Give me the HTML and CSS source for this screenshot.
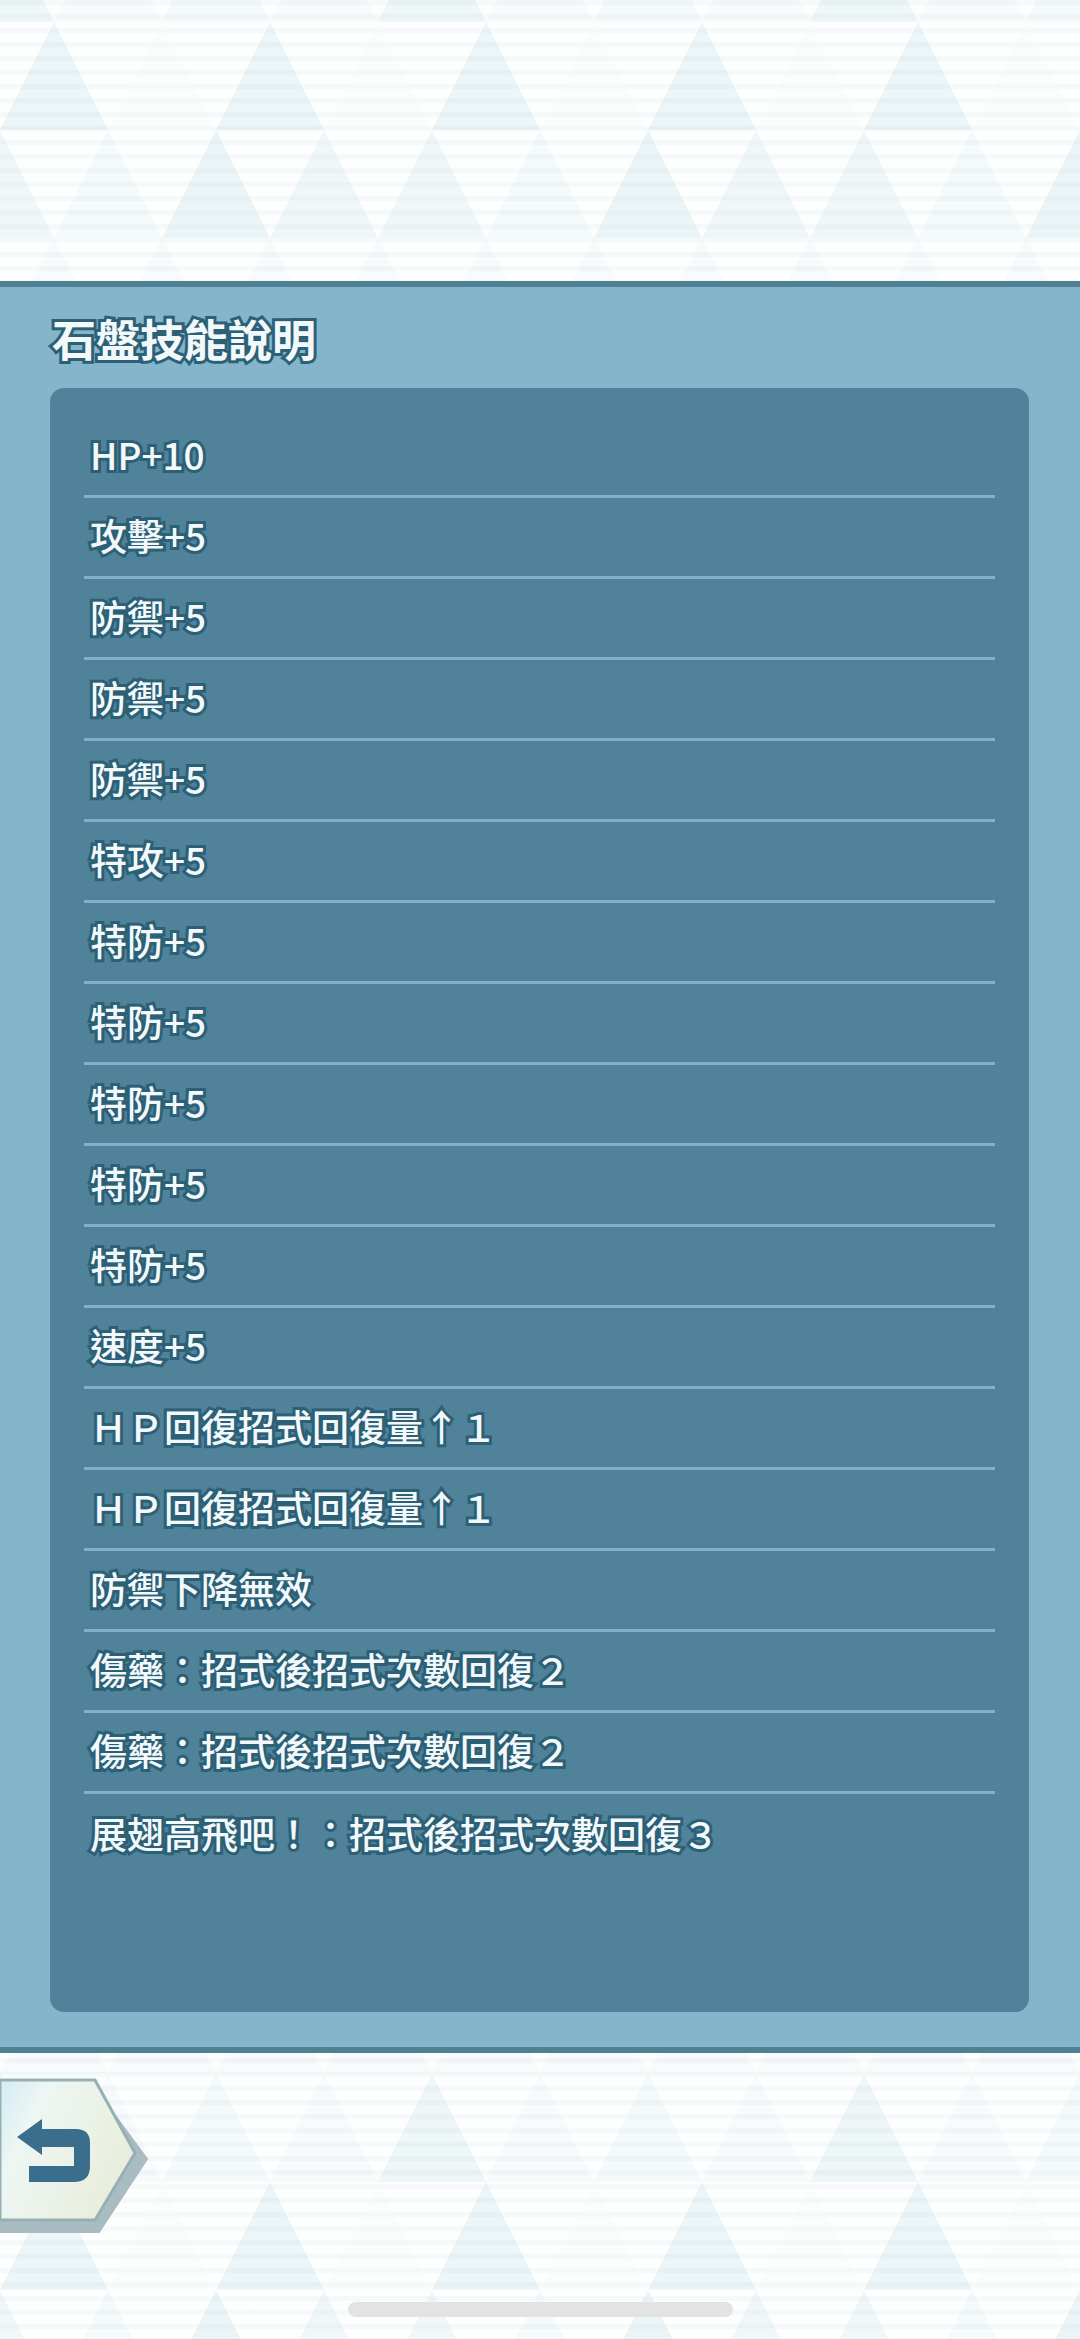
FILE: index.html
```html
<!DOCTYPE html>
<html lang="zh-Hant">
<head>
  <meta charset="UTF-8" />
  <meta name="viewport" content="width=device-width, initial-scale=1" />
  <title>石盤技能說明</title>
  <link rel="stylesheet" href="styles.css">
</head>
<body>
  <div class="top-space"></div>

  <main class="panel">
    <h1 class="panel-title">石盤技能說明</h1>
    <ul class="skill-list">
      <li class="skill">HP+10</li>
      <li class="skill">攻擊+5</li>
      <li class="skill">防禦+5</li>
      <li class="skill">防禦+5</li>
      <li class="skill">防禦+5</li>
      <li class="skill">特攻+5</li>
      <li class="skill">特防+5</li>
      <li class="skill">特防+5</li>
      <li class="skill">特防+5</li>
      <li class="skill">特防+5</li>
      <li class="skill">特防+5</li>
      <li class="skill">速度+5</li>
      <li class="skill">ＨＰ回復招式回復量↑１</li>
      <li class="skill">ＨＰ回復招式回復量↑１</li>
      <li class="skill">防禦下降無效</li>
      <li class="skill">傷藥：招式後招式次數回復２</li>
      <li class="skill">傷藥：招式後招式次數回復２</li>
      <li class="skill skill-last">展翅高飛吧！：招式後招式次數回復３</li>
    </ul>
  </main>

  <footer class="bottom">
    <button class="back-btn" aria-label="返回">
      <svg width="150" height="160" viewBox="0 0 150 160">
        <defs>
          <linearGradient id="faceFill" x1="0" y1="0" x2="1" y2="0.5">
            <stop offset="0" stop-color="#d3ecf4" />
            <stop offset="0.3" stop-color="#eef6f3" />
            <stop offset="1" stop-color="#e8eedc" />
          </linearGradient>
        </defs>
        <path d="M0 16H97L147 84L99 157H0Z" fill="#a8bcc1" stroke="#a8bcc1" stroke-width="2" stroke-linejoin="round" />
        <path d="M0 5H95L135 78L95 145H0Z" fill="url(#faceFill)" stroke="#98afb3" stroke-width="3" stroke-linejoin="round" />
        <path d="M17 62L42 44V54H76Q90 54 90 68V91Q90 107 74 107H29V91H74V72H42V80Z" fill="#3b6e8c" />
      </svg>
    </button>
    <div class="home-bar"></div>
  </footer>
</body>
</html>
```

FILE: styles.css
```css
:root {
  --panel: #84b5ca;
  --panel-dark: #50829a;
  --edge: #4f8094;
  --divider: #7fb2c8;
  --text: #f3f9fb;
  --outline: #2c6076;
}

* {
  box-sizing: border-box;
  margin: 0;
  padding: 0;
}

body {
  width: 1080px;
  height: 2339px;
  overflow: hidden;
  display: flex;
  flex-direction: column;
  font-family: "Noto Sans CJK TC", "Noto Sans", sans-serif;
  color: var(--text);
  background-color: #fdfefe;
  background-image:
    repeating-linear-gradient(180deg, rgba(200, 220, 226, 0.14) 0 5px, rgba(255, 255, 255, 0.1) 5px 14px),
    url("data:image/svg+xml,%3Csvg xmlns='http://www.w3.org/2000/svg' width='432' height='432'%3E%3Cpath fill='%23d5e9ef' fill-opacity='.42' d='M-54 108L0 0L54 108ZM378 108L432 0L486 108Z'/%3E%3Cpath fill='%23d5e9ef' fill-opacity='.16' d='M54 108L108 0L162 108ZM270 108L324 0L378 108Z'/%3E%3Cpath fill='%23d5e9ef' fill-opacity='.26' d='M162 108L216 0L270 108Z'/%3E%3Cpath fill='%23d5e9ef' fill-opacity='.48' d='M0 216L54 108L108 216ZM216 216L270 108L324 216Z'/%3E%3Cpath fill='%23d5e9ef' fill-opacity='.06' d='M108 216L162 108L216 216ZM324 216L378 108L432 216Z'/%3E%3Cpath fill='%23d5e9ef' fill-opacity='.36' d='M-54 324L0 216L54 324ZM378 324L432 216L486 324Z'/%3E%3Cpath fill='%23d5e9ef' fill-opacity='.22' d='M54 324L108 216L162 324Z'/%3E%3Cpath fill='%23d5e9ef' fill-opacity='.5' d='M162 324L216 216L270 324Z'/%3E%3Cpath fill='%23d5e9ef' fill-opacity='.34' d='M270 324L324 216L378 324Z'/%3E%3Cpath fill='%23d5e9ef' fill-opacity='.16' d='M0 432L54 324L108 432ZM108 432L162 324L216 432ZM216 432L270 324L324 432ZM324 432L378 324L432 432Z'/%3E%3C/svg%3E");
  background-position: 0 0, 0 -86px;
}

.top-space {
  height: 281px;
}

.panel {
  height: 1772px;
  display: flex;
  flex-direction: column;
  background: var(--panel);
  border-top: 6px solid var(--edge);
  border-bottom: 6px solid var(--edge);
}

.panel-title {
  padding: 26px 0 0 52px;
  margin-bottom: 25px;
  font-size: 44px;
  line-height: 50px;
  font-weight: 700;
  -webkit-text-stroke: 6px var(--outline);
  paint-order: stroke fill;
}

.skill-list {
  flex: 1;
  list-style: none;
  margin: 0 51px 35px 50px;
  padding: 29px 34px 0;
  background: var(--panel-dark);
  border-radius: 14px;
}

.skill {
  height: 81px;
  padding: 0 0 4px 6px;
  display: flex;
  align-items: center;
  border-bottom: 3px solid var(--divider);
  font-size: 37px;
  font-weight: 500;
  -webkit-text-stroke: 6px var(--outline);
  paint-order: stroke fill;
}

.skill-last {
  border-bottom: none;
}

.bottom {
  flex: 1;
  display: flex;
  flex-direction: column;
  padding-top: 22px;
}

.back-btn {
  display: block;
  width: 150px;
  height: 160px;
  border: none;
  background: none;
  cursor: pointer;
}

.home-bar {
  width: 385px;
  height: 15px;
  margin: 67px 0 0 348px;
  background: #e3e3e3;
  border-radius: 8px;
}
```
